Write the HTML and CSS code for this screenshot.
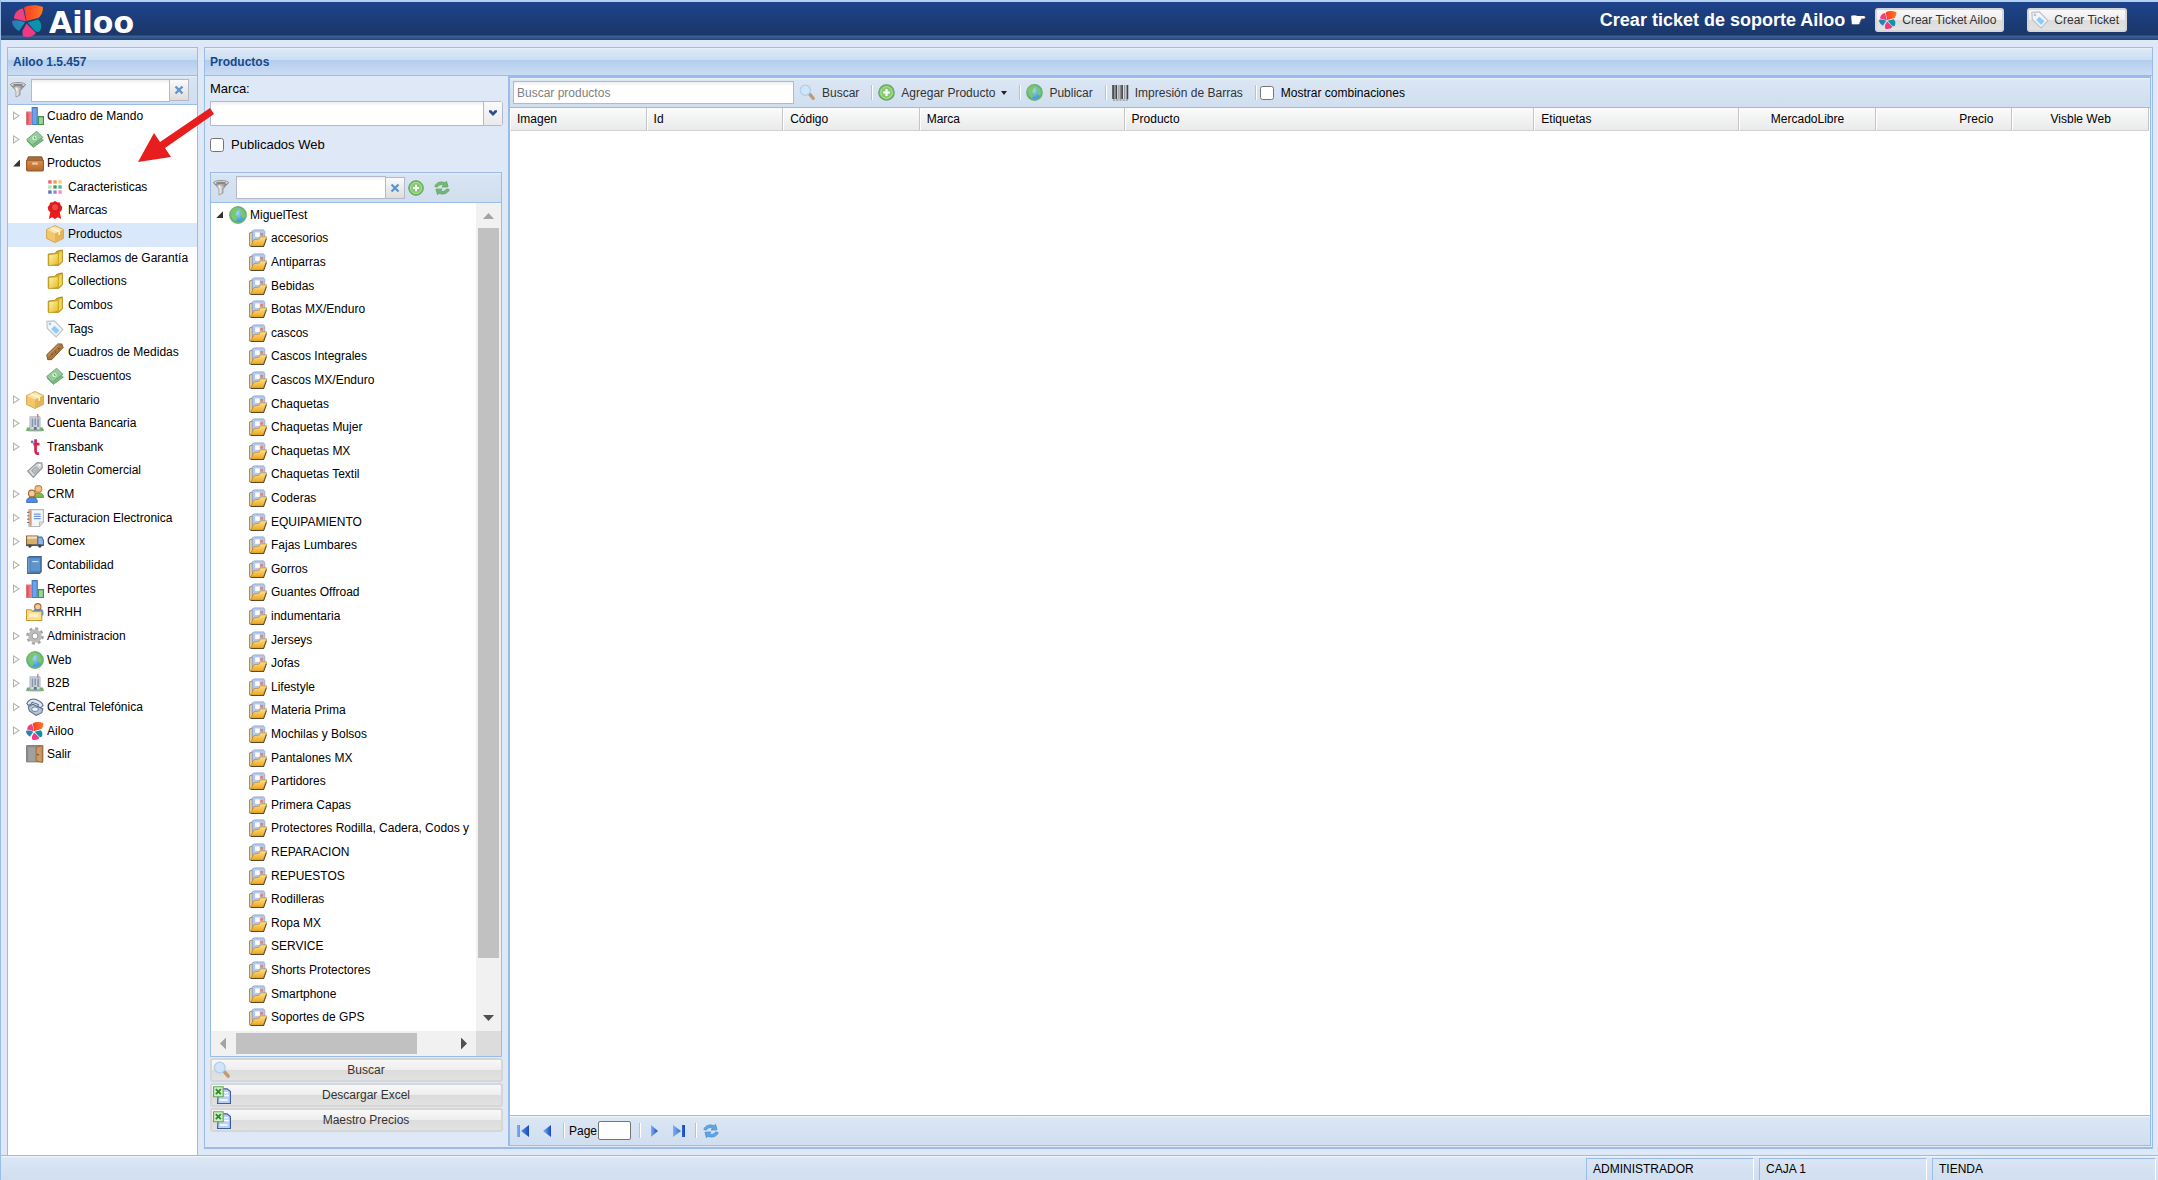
FILE: index.html
```html
<!DOCTYPE html>
<html lang="es">
  <head>
    <meta charset="UTF-8" />
    <meta name="viewport" content="width=device-width, initial-scale=1.0" />
    <title>Ailoo - Productos</title>
    <link rel="stylesheet" href="styles.css">
  </head>
  <body>
    <!-- Icons -->
    <svg class="sprite" aria-hidden="true">
      <defs>
        <linearGradient id="g-red" x1="0" x2="1"><stop offset="0" stop-color="#e0343f" /><stop offset="1" stop-color="#f59a9a" /></linearGradient>
        <linearGradient id="g-gold" x1="0" x2="1" y2="1"><stop offset="0" stop-color="#fdf6b0" /><stop offset="1" stop-color="#e3b820" /></linearGradient>
        <linearGradient id="g-folder" x2="0" y2="1"><stop offset="0" stop-color="#ffe28a" /><stop offset="1" stop-color="#eda51e" /></linearGradient>
        <linearGradient id="g-wood" x2="0" y2="1"><stop offset="0" stop-color="#d98d4c" /><stop offset="1" stop-color="#b56a2c" /></linearGradient>
        <linearGradient id="g-steel" x1="0" x2="1"><stop offset="0" stop-color="#555" /><stop offset=".4" stop-color="#f2f2f2" /><stop offset="1" stop-color="#555" /></linearGradient>
        <linearGradient id="g-blue" x1="0" x2="1"><stop offset="0" stop-color="#7fb0f5" /><stop offset="1" stop-color="#1549c0" /></linearGradient>
        <linearGradient id="g-orange" x1="0" x2="1"><stop offset="0" stop-color="#fb3a2c" /><stop offset="1" stop-color="#fd7a1c" /></linearGradient>
        <linearGradient id="g-teal" x1="0" x2="1"><stop offset="0" stop-color="#3a6fb4" /><stop offset="1" stop-color="#0a9db4" /></linearGradient>
        <radialGradient id="g-globe" cx=".4" cy=".35"><stop offset="0" stop-color="#a8dcf8" /><stop offset="1" stop-color="#4a9fdc" /></radialGradient>
      </defs>
      <symbol id="i-chart" viewBox="0 0 16 16">
        <path d="M.5 4.500h4v11h-4z" fill="url(#g-red)" stroke="#e2757b" />
        <path d="M5.500.5h4.500v15h-4.500z" fill="#6ea3ea" stroke="#4478cc" />
        <path d="M11 8.500h4.500v7h-4.500z" fill="#9ad49b" stroke="#3f9247" />
      </symbol>
      <symbol id="i-money" viewBox="0 0 16 16">
        <path d="M1 10 10.500 4.500l5 4.500-9 6.500z" fill="#7fb886" stroke="#5c9c66" stroke-width=".6" />
        <path d="M.5 8.500 9.500 1l5.500 5.500-9.500 7z" fill="#94cb98" stroke="#5c9c66" stroke-width=".7" />
        <circle cx="7.500" cy="7.200" r="2" fill="#d8f0d6" /><path d="m7.200 6 1 2" stroke="#5c9c66" />
      </symbol>
      <symbol id="i-crate" viewBox="0 0 16 16">
        <path d="M2 2.500h12l1.500 4H.5z" fill="#a8713f" stroke="#6d4118" stroke-width=".7" />
        <rect x=".5" y="5.500" width="15" height="9.500" rx="1" fill="url(#g-wood)" stroke="#9c5a26" />
        <path d="M5.500 7.500h5v2h-5z" fill="#f1c79a" />
      </symbol>
      <symbol id="i-dots" viewBox="0 0 16 16">
        <path d="M2 2h3v3H2z" fill="#f26464" /><path d="M6.500 2h3v3h-3z" fill="#f59a54" /><path d="M11 2h3v3h-3z" fill="#f2d36b" />
        <path d="M2 6.500h3v3H2z" fill="#b7e0a3" /><path d="M6.500 6.500h3v3h-3z" fill="#3aa845" /><path d="M11 6.500h3v3h-3z" fill="#4db9b0" />
        <path d="M2 11h3v3H2z" fill="#5476c4" /><path d="M6.500 11h3v3h-3z" fill="#b07cc8" /><path d="M11 11h3v3h-3z" fill="#f08cc8" />
      </symbol>
      <symbol id="i-ribbon" viewBox="0 0 16 16">
        <path d="M4 9 2.500 16l3-1.500L8 16l2.500-1.500 3 1.500L12 9z" fill="#f01818" />
        <path d="m8 0 2 1 2.200.3.800 2.200L14.500 5.500 14 8l-1.500 1.800-2.300.7L8 11.500l-2.200-1-2.300-.7L2 8l-.5-2.500L3 3.500l.8-2.200L6 1z" fill="#e61c1c" />
        <circle cx="8" cy="5.600" r="3.200" fill="#f04848" stroke="#c91010" stroke-width=".7" />
      </symbol>
      <symbol id="i-box" viewBox="0 0 16 16">
        <path d="M8 .5 15.500 4v8L8 15.500.5 12V4z" fill="#f3c76c" stroke="#d2a04a" stroke-width=".8" />
        <path d="M8 1 15 4.200 8 7.500 1 4.200z" fill="#fbe6a8" /><path d="m8 7.500 7-3.300v7.500l-7 3.300z" fill="#e6b356" />
        <path d="m3.500 2.800 7.500 3.400v3l1.500-.7V5.400L5.500 2z" fill="#fff6dc" />
      </symbol>
      <symbol id="i-files" viewBox="0 0 16 16">
        <path d="M2 4.500 8 4l1.500-2L14.500.8v10.700l-3 3H2z" fill="#d8ae22" stroke="#a98310" stroke-width=".8" />
        <path d="m2.500 5 8.500-1V13.500l-8.500 1.500z" fill="url(#g-gold)" stroke="#c49a18" stroke-width=".6" />
        <path d="m11.500 3.500 2.500-1.500v9l-2.500 2z" fill="#f2d84c" />
      </symbol>
      <symbol id="i-tag" viewBox="0 0 16 16">
        <path d="M.7 1.200 7.500.8 15 8.500 9 15 1.200 7.500z" fill="#f3f6f9" stroke="#b9c3cc" />
        <path d="m7.500 5 4.500 4.200-3 3.200-4.500-4.300z" fill="#8fcbfa" /><circle cx="3.500" cy="3.500" r="1.200" fill="#b9c3cc" />
      </symbol>
      <symbol id="i-ruler" viewBox="0 0 16 16">
        <path d="M.6 10.500 10.500.8h3.500l1.300 3.200L5 14.800H1.500z" fill="#a97640" stroke="#80501f" stroke-width=".8" />
        <path d="m1.500 11.500 10-10" stroke="#c99860" /><path d="M5 10h1M8 8h1M11 5h1" stroke="#5d3610" />
      </symbol>
      <symbol id="i-bank" viewBox="0 0 16 16">
        <path d="M1 12h14l1 3H0z" fill="#6ab35f" /><path d="M3.500 2.500h9V14h-9z" fill="#d2d9e1" stroke="#9aa5b1" stroke-width=".7" />
        <path d="M5 4h1.500v7.500H5zM7.500 4H9v6H7.500zM10 4h1.500v7.500H10z" fill="#8797aa" /><path d="M7 11.500h2.500V14H7z" fill="#5d7390" />
        <path d="M2 14.500h12v1H2z" fill="#aaa" /><path d="M10 0h1v3h-1z" fill="#d55" />
      </symbol>
      <symbol id="i-transbank" viewBox="0 0 16 16">
        <path d="M8.500 1v10.500c0 2 1 2.700 3 2.200M6.500 5.500H12" fill="none" stroke="#d6224f" stroke-width="2.400" />
        <circle cx="5.500" cy="3.500" r="1.200" fill="#3f7fd0" />
      </symbol>
      <symbol id="i-label" viewBox="0 0 16 16">
        <path d="M1.500 9 10 1.500 14 1.800 14.500 6 6.500 14.500z" fill="#d5d8db" stroke="#8d9297" />
        <path d="m5 8.500 4-3.500 2.500 2.500-4 4z" fill="#b8bdc2" stroke="#8d9297" stroke-width=".7" /><circle cx="12.200" cy="3.700" r="1" fill="#fff" />
      </symbol>
      <symbol id="i-users" viewBox="0 0 16 16">
        <path d="M6.500 10c0-4 9-4 9 0v1h-9z" fill="#82bb4c" stroke="#4c8a22" stroke-width=".7" /><circle cx="11" cy="3.500" r="3" fill="#f5c088" stroke="#c28a3c" />
        <path d="M.5 14.500c0-5 9.500-5 9.500 0v1H.5z" fill="#4f8fdc" stroke="#2c62ad" stroke-width=".7" /><circle cx="5.200" cy="7.500" r="3" fill="#f5c8a0" stroke="#a86a30" />
      </symbol>
      <symbol id="i-invoice" viewBox="0 0 16 16">
        <path d="M2.500.5h13v11l-3.500 4H2.500z" fill="#f4f5f7" stroke="#b5b9bf" /><path d="M3 1h2v14H3z" fill="#dc9866" />
        <path d="M7 4.500h6M7 6.500h6M7 8.500h6" stroke="#6d9bdd" /><path d="M1 3h2M1 6h2M1 9h2M1 12h2" stroke="#777" />
        <path d="M12 15.500v-4h3.500" fill="#ddd" stroke="#aaa" stroke-width=".6" />
      </symbol>
      <symbol id="i-truck" viewBox="0 0 16 16">
        <path d="M.5 3.500h10v8H.5z" fill="#d8ad72" stroke="#8b6536" /><path d="M1 4h9v2H1z" fill="#f4dfba" />
        <path d="M10.500 4.500h3.500l1.500 3v4.500h-5z" fill="#8fb6e5" stroke="#4672a8" /><path d="M0 11h15.500v1.500H0z" fill="#4a5668" />
        <circle cx="3.500" cy="12.500" r="1.500" fill="#444" /><circle cx="12.300" cy="12.500" r="1.500" fill="#444" />
      </symbol>
      <symbol id="i-book" viewBox="0 0 16 16">
        <path d="M1.500 1.500 3 .5h10.500v13.500L12 15.500H1.500z" fill="#4a7db5" stroke="#3a6698" /><path d="M4 2h8.500v11.500H4z" fill="#5f93c9" />
        <path d="M5.500 5H11" stroke="#cfe2f5" /><path d="M2.500 2v12.500" stroke="#85b0da" />
      </symbol>
      <symbol id="i-staff" viewBox="0 0 16 16">
        <path d="M6 8c0-4.500 9.500-4.500 9.500 0v3H6z" fill="#5b93d8" /><circle cx="10.500" cy="3.300" r="2.800" fill="#f5c8a0" stroke="#a86a30" />
        <path d="M.5 6h4l1.500 1.500h8v8H.5z" fill="#fbe08c" stroke="#c99a35" /><path d="M3 9.500h8v3H3z" fill="#fff3c4" />
      </symbol>
      <symbol id="i-gear" viewBox="0 0 16 16">
        <circle cx="8" cy="8" r="6.600" fill="none" stroke="#a4a4a4" stroke-width="2.400" stroke-dasharray="2.600 2.584" />
        <circle cx="8" cy="8" r="4.300" fill="none" stroke="#bcbcbc" stroke-width="3.400" /><circle cx="8" cy="8" r="2.600" fill="#fff" stroke="#8e8e8e" stroke-width=".8" />
      </symbol>
      <symbol id="i-globe" viewBox="0 0 16 16">
        <circle cx="8" cy="8" r="7.200" fill="url(#g-globe)" stroke="#6db562" stroke-width="1.400" />
        <path d="M2 5c1-2.500 3-3.500 5.500-3.800L8.500 3 6.500 5 7 6.500 5 7 7.500 9 6.500 12 5.500 13.500C3 12 1.500 9 2 5zM10 2l3 2 1.500 4-1.500 3.500-1.500-2L10 8l.5-2.500L9.500 4z" fill="#7cc66c" />
      </symbol>
      <symbol id="i-phone" viewBox="0 0 16 16">
        <path d="m2 8 4-2.500L15 9.500 14 13l-5 2.500-6-4z" fill="#b6c4d8" stroke="#586c8c" stroke-width=".9" />
        <path d="M.7 4.800C2 1.500 6 .2 9 1.300c3 1.200 6 3.200 6.200 5.500l-2.400 2-2.300-1.500.5-1.500L5.500 3.800 4.500 5.500 2 6.500z" fill="#dce4ef" stroke="#586c8c" stroke-width=".9" />
        <ellipse cx="8" cy="10" rx="3" ry="2" fill="#f3f6fa" stroke="#586c8c" stroke-width=".7" />
      </symbol>
      <symbol id="i-ailoo" viewBox="0 0 32 32">
        <path d="M14 16.500 2 13.500C2 8 6 4 11 3.500z" fill="#f0417c" />
        <path d="M14.500 16 12 2.500C17-.5 25-.5 31 2c0 5-2 9-5 11z" fill="url(#g-orange)" />
        <path d="M15.500 17.500 26 14.500c4 3 4 8 1.500 12-2 1-4 0-5-1z" fill="#0a93ac" />
        <path d="M14.500 18.500 24 28c-3 4-9 5-13 3-1-3-.5-6 .5-7z" fill="#ee3a84" />
        <path d="M13 17.500 7 26C3 24 0 20 0 16c3-1.500 8-1 13 1.500z" fill="url(#g-teal)" />
      </symbol>
      <symbol id="i-door" viewBox="0 0 16 16">
        <path d="M.5.500h14.500v14.500H.5z" fill="#8a8a8a" stroke="#777" stroke-width=".8" /><path d="M2 2h7v12.500H2z" fill="#a0a0a0" />
        <path d="m9 2 5.500-1.500v15L9 14z" fill="#cf9a62" stroke="#9a6832" stroke-width=".8" /><circle cx="10.500" cy="8.500" r=".8" fill="#553" />
      </symbol>
      <symbol id="i-category" viewBox="0 0 16 16">
        <path d="M.5 3.500 3 2.500V15H.5z" fill="#ecd596" stroke="#8d7d5a" stroke-width=".8" /><path d="M3 1.500 5 .8h8l1 1.500V10H3z" fill="#b5c8ea" stroke="#93a8d0" stroke-width=".8" />
        <path d="M5.500 3h4v4h-4z" fill="#fff" /><path d="M10 3.500h2.500V6H10z" fill="#e08472" />
        <path d="M1.500 15.300 4.500 9.500l4.500-.5L10 7h5.800l-3 8.300z" fill="url(#g-folder)" stroke="#b9862c" stroke-width=".6" /><path d="M1.500 15.500h11.500l2.500-7" fill="none" stroke="#5c4a28" stroke-width=".9" />
      </symbol>
      <symbol id="i-filter" viewBox="0 0 16 16">
        <path d="M.5 2.500 6 9v6l4-2V9l5.500-6.500z" fill="url(#g-steel)" stroke="#777" stroke-width=".6" />
        <ellipse cx="8" cy="2.700" rx="7.400" ry="2.200" fill="#ddd" stroke="#777" stroke-width=".7" /><ellipse cx="8" cy="2.900" rx="5" ry="1.200" fill="#888" />
      </symbol>
      <symbol id="i-add" viewBox="0 0 16 16">
        <circle cx="8" cy="8" r="7.300" fill="#7cc26c" stroke="#5ba652" /><circle cx="8" cy="8" r="5.500" fill="#85ca70" stroke="#b9e2ac" stroke-width=".8" />
        <path d="M8 4.800v6.400M4.800 8h6.400" stroke="#fff" stroke-width="2" />
      </symbol>
      <symbol id="i-refresh" viewBox="0 0 16 16">
        <path d="M.8 6.500C2 2.500 7 .8 11 2.800l1.500-1.500 1.500 5.500-6 .2 1.500-1.700C7.500 4 4.500 4.500 3.500 7z" fill="currentColor" fill-opacity=".75" stroke="currentColor" stroke-width=".8" />
        <path d="M15.200 9.500C14 13.500 9 15.200 5 13.200l-1.500 1.500L2 9.200 8 9l-1.500 1.700c2 1.300 5 .8 6-1.700z" fill="currentColor" fill-opacity=".75" stroke="currentColor" stroke-width=".8" />
      </symbol>
      <symbol id="i-search" viewBox="0 0 16 16">
        <path d="m10 9.500 3.500 4" stroke="#c39a6c" stroke-width="3" stroke-linecap="round" />
        <circle cx="6" cy="5.800" r="4.800" fill="#cfe5fa" stroke="#b4cdea" stroke-width="1.200" />
      </symbol>
      <symbol id="i-barcode" viewBox="0 0 16 16">
        <path d="M1 1v13M4 1v13M9.500 1v13M14.500 1v13" stroke="#444" stroke-width="1.600" /><path d="M2.500 1v13M6.500 1v13M8 1v13M12 1v13" stroke="#888" /><path d="M1 15h14" stroke="#777" stroke-dasharray="2 1" />
      </symbol>
      <symbol id="i-excel" viewBox="0 0 16 16">
        <path d="M5 2.500h7.500l3 2.500v10.500H4z" fill="#b9d0f4" stroke="#3a5f9c" /><path d="M6 12.500h7M10 6h3.500M10 8.500h4" stroke="#fff" stroke-width="1.400" />
        <path d="M.5.700h8.500v8.800H.5z" fill="#d3edca" stroke="#62ab56" /><path d="m2.500 2.800 4.500 4.500M7 2.800 2.500 7.300" stroke="#2a8c24" stroke-width="1.600" />
      </symbol>
      <symbol id="i-first" viewBox="0 0 16 16"><path d="M2 2h3v12H2zM14 2v12L6 8z" fill="url(#g-blue)" /></symbol>
      <symbol id="i-prev" viewBox="0 0 16 16"><path d="M12 2v12L4 8z" fill="url(#g-blue)" /></symbol>
      <symbol id="i-next" viewBox="0 0 16 16"><path d="M4 2v12l7-6z" fill="url(#g-blue)" /></symbol>
      <symbol id="i-last" viewBox="0 0 16 16"><path d="M11 2h3v12h-3zM2 2v12l8-6z" fill="url(#g-blue)" /></symbol>
      <symbol id="i-clear" viewBox="0 0 16 16"><path d="m4 4 8 8M12 4l-8 8" stroke="#5b93cd" stroke-width="2.600" /></symbol>
    </svg>

    <header class="topbar">
      <div class="logo">
        <svg class="logo-mark"><use href="#i-ailoo" /></svg>
        <span>Ailoo</span>
      </div>
      <div class="support">
        <strong>Crear ticket de soporte Ailoo ☛</strong>
        <button type="button" class="btn"><svg class="icon"><use href="#i-ailoo" /></svg>Crear Ticket Ailoo</button>
        <button type="button" class="btn"><svg class="icon"><use href="#i-tag" /></svg>Crear Ticket</button>
      </div>
    </header>

    <div class="viewport">
      <nav class="sidebar">
        <h2 class="panel-title">Ailoo 1.5.457</h2>
        <div class="filter-bar">
          <svg class="icon"><use href="#i-filter" /></svg>
          <input type="text" class="field" aria-label="Filtrar menú" />
          <button type="button" class="clear" aria-label="Limpiar"><svg><use href="#i-clear" /></svg></button>
        </div>
        <ul class="tree menu">
          <li><a href="#"><i class="arrow"></i><svg class="icon"><use href="#i-chart" /></svg>Cuadro de Mando</a></li>
          <li><a href="#"><i class="arrow"></i><svg class="icon"><use href="#i-money" /></svg>Ventas</a></li>
          <li><a href="#"><i class="arrow open"></i><svg class="icon"><use href="#i-crate" /></svg>Productos</a></li>
          <li class="child"><a href="#"><svg class="icon"><use href="#i-dots" /></svg>Caracteristicas</a></li>
          <li class="child"><a href="#"><svg class="icon"><use href="#i-ribbon" /></svg>Marcas</a></li>
          <li class="child selected"><a href="#"><svg class="icon"><use href="#i-box" /></svg>Productos</a></li>
          <li class="child"><a href="#"><svg class="icon"><use href="#i-files" /></svg>Reclamos de Garantía</a></li>
          <li class="child"><a href="#"><svg class="icon"><use href="#i-files" /></svg>Collections</a></li>
          <li class="child"><a href="#"><svg class="icon"><use href="#i-files" /></svg>Combos</a></li>
          <li class="child"><a href="#"><svg class="icon"><use href="#i-tag" /></svg>Tags</a></li>
          <li class="child"><a href="#"><svg class="icon"><use href="#i-ruler" /></svg>Cuadros de Medidas</a></li>
          <li class="child"><a href="#"><svg class="icon"><use href="#i-money" /></svg>Descuentos</a></li>
          <li><a href="#"><i class="arrow"></i><svg class="icon"><use href="#i-box" /></svg>Inventario</a></li>
          <li><a href="#"><i class="arrow"></i><svg class="icon"><use href="#i-bank" /></svg>Cuenta Bancaria</a></li>
          <li><a href="#"><i class="arrow"></i><svg class="icon"><use href="#i-transbank" /></svg>Transbank</a></li>
          <li><a href="#"><i class="arrow none"></i><svg class="icon"><use href="#i-label" /></svg>Boletin Comercial</a></li>
          <li><a href="#"><i class="arrow"></i><svg class="icon"><use href="#i-users" /></svg>CRM</a></li>
          <li><a href="#"><i class="arrow"></i><svg class="icon"><use href="#i-invoice" /></svg>Facturacion Electronica</a></li>
          <li><a href="#"><i class="arrow"></i><svg class="icon"><use href="#i-truck" /></svg>Comex</a></li>
          <li><a href="#"><i class="arrow"></i><svg class="icon"><use href="#i-book" /></svg>Contabilidad</a></li>
          <li><a href="#"><i class="arrow"></i><svg class="icon"><use href="#i-chart" /></svg>Reportes</a></li>
          <li><a href="#"><i class="arrow none"></i><svg class="icon"><use href="#i-staff" /></svg>RRHH</a></li>
          <li><a href="#"><i class="arrow"></i><svg class="icon"><use href="#i-gear" /></svg>Administracion</a></li>
          <li><a href="#"><i class="arrow"></i><svg class="icon"><use href="#i-globe" /></svg>Web</a></li>
          <li><a href="#"><i class="arrow"></i><svg class="icon"><use href="#i-bank" /></svg>B2B</a></li>
          <li><a href="#"><i class="arrow"></i><svg class="icon"><use href="#i-phone" /></svg>Central Telefónica</a></li>
          <li><a href="#"><i class="arrow"></i><svg class="icon"><use href="#i-ailoo" /></svg>Ailoo</a></li>
          <li><a href="#"><i class="arrow none"></i><svg class="icon"><use href="#i-door" /></svg>Salir</a></li>
        </ul>
        <svg class="pointer" viewBox="0 0 76 56" aria-hidden="true">
          <path d="M72 0 22 34 16 25 0 54 33 49 27 40 76 6z" fill="#e81e1e" />
        </svg>
      </nav>

      <main class="panel">
        <h1 class="panel-title">Productos</h1>
        <div class="panel-body">
          <section class="search-form">
            <label for="marca">Marca:</label>
            <div class="combo">
              <select id="marca"><option></option></select>
              <svg class="combo-arrow" viewBox="0 0 10 8"><path d="M0 0h3l2 2.500L7 0h3v2L5 7 0 2z" fill="#2c4f8c" /></svg>
            </div>
            <label class="check"><input type="checkbox" />Publicados Web</label>

            <div class="categories">
              <div class="filter-bar">
                <svg class="icon"><use href="#i-filter" /></svg>
                <input type="text" class="field" aria-label="Filtrar categorías" />
                <button type="button" class="clear" aria-label="Limpiar"><svg><use href="#i-clear" /></svg></button>
                <button type="button" class="tool" aria-label="Agregar"><svg><use href="#i-add" /></svg></button>
                <button type="button" class="tool green" aria-label="Actualizar"><svg><use href="#i-refresh" /></svg></button>
              </div>
              <div class="scroll-area">
                <ul class="tree category-tree">
                  <li><a href="#"><i class="arrow open"></i><svg class="icon"><use href="#i-globe" /></svg>MiguelTest</a></li>
                  <li class="child"><a href="#"><svg class="icon"><use href="#i-category" /></svg>accesorios</a></li>
                  <li class="child"><a href="#"><svg class="icon"><use href="#i-category" /></svg>Antiparras</a></li>
                  <li class="child"><a href="#"><svg class="icon"><use href="#i-category" /></svg>Bebidas</a></li>
                  <li class="child"><a href="#"><svg class="icon"><use href="#i-category" /></svg>Botas MX/Enduro</a></li>
                  <li class="child"><a href="#"><svg class="icon"><use href="#i-category" /></svg>cascos</a></li>
                  <li class="child"><a href="#"><svg class="icon"><use href="#i-category" /></svg>Cascos Integrales</a></li>
                  <li class="child"><a href="#"><svg class="icon"><use href="#i-category" /></svg>Cascos MX/Enduro</a></li>
                  <li class="child"><a href="#"><svg class="icon"><use href="#i-category" /></svg>Chaquetas</a></li>
                  <li class="child"><a href="#"><svg class="icon"><use href="#i-category" /></svg>Chaquetas Mujer</a></li>
                  <li class="child"><a href="#"><svg class="icon"><use href="#i-category" /></svg>Chaquetas MX</a></li>
                  <li class="child"><a href="#"><svg class="icon"><use href="#i-category" /></svg>Chaquetas Textil</a></li>
                  <li class="child"><a href="#"><svg class="icon"><use href="#i-category" /></svg>Coderas</a></li>
                  <li class="child"><a href="#"><svg class="icon"><use href="#i-category" /></svg>EQUIPAMIENTO</a></li>
                  <li class="child"><a href="#"><svg class="icon"><use href="#i-category" /></svg>Fajas Lumbares</a></li>
                  <li class="child"><a href="#"><svg class="icon"><use href="#i-category" /></svg>Gorros</a></li>
                  <li class="child"><a href="#"><svg class="icon"><use href="#i-category" /></svg>Guantes Offroad</a></li>
                  <li class="child"><a href="#"><svg class="icon"><use href="#i-category" /></svg>indumentaria</a></li>
                  <li class="child"><a href="#"><svg class="icon"><use href="#i-category" /></svg>Jerseys</a></li>
                  <li class="child"><a href="#"><svg class="icon"><use href="#i-category" /></svg>Jofas</a></li>
                  <li class="child"><a href="#"><svg class="icon"><use href="#i-category" /></svg>Lifestyle</a></li>
                  <li class="child"><a href="#"><svg class="icon"><use href="#i-category" /></svg>Materia Prima</a></li>
                  <li class="child"><a href="#"><svg class="icon"><use href="#i-category" /></svg>Mochilas y Bolsos</a></li>
                  <li class="child"><a href="#"><svg class="icon"><use href="#i-category" /></svg>Pantalones MX</a></li>
                  <li class="child"><a href="#"><svg class="icon"><use href="#i-category" /></svg>Partidores</a></li>
                  <li class="child"><a href="#"><svg class="icon"><use href="#i-category" /></svg>Primera Capas</a></li>
                  <li class="child"><a href="#"><svg class="icon"><use href="#i-category" /></svg>Protectores Rodilla, Cadera, Codos y</a></li>
                  <li class="child"><a href="#"><svg class="icon"><use href="#i-category" /></svg>REPARACION</a></li>
                  <li class="child"><a href="#"><svg class="icon"><use href="#i-category" /></svg>REPUESTOS</a></li>
                  <li class="child"><a href="#"><svg class="icon"><use href="#i-category" /></svg>Rodilleras</a></li>
                  <li class="child"><a href="#"><svg class="icon"><use href="#i-category" /></svg>Ropa MX</a></li>
                  <li class="child"><a href="#"><svg class="icon"><use href="#i-category" /></svg>SERVICE</a></li>
                  <li class="child"><a href="#"><svg class="icon"><use href="#i-category" /></svg>Shorts Protectores</a></li>
                  <li class="child"><a href="#"><svg class="icon"><use href="#i-category" /></svg>Smartphone</a></li>
                  <li class="child"><a href="#"><svg class="icon"><use href="#i-category" /></svg>Soportes de GPS</a></li>
                </ul>
                <div class="vscroll"><i class="tri up"></i><div class="track"><div class="thumb"></div></div><i class="tri down"></i></div>
                <div class="hscroll"><i class="tri left"></i><div class="track"><div class="thumb"></div></div><i class="tri right"></i></div>
                <div class="corner"></div>
              </div>
            </div>

            <button type="button" class="btn wide"><svg class="icon"><use href="#i-search" /></svg><span>Buscar</span></button>
            <button type="button" class="btn wide"><svg class="icon"><use href="#i-excel" /></svg><span>Descargar Excel</span></button>
            <button type="button" class="btn wide"><svg class="icon"><use href="#i-excel" /></svg><span>Maestro Precios</span></button>
          </section>

          <section class="grid-panel">
            <div class="toolbar">
              <input type="text" class="field" placeholder="Buscar productos" aria-label="Buscar productos" />
              <button type="button" class="flat"><svg class="icon"><use href="#i-search" /></svg>Buscar</button>
              <span class="sep"></span>
              <button type="button" class="flat"><svg class="icon"><use href="#i-add" /></svg>Agregar Producto<i class="caret"></i></button>
              <span class="sep"></span>
              <button type="button" class="flat"><svg class="icon"><use href="#i-globe" /></svg>Publicar</button>
              <span class="sep"></span>
              <button type="button" class="flat"><svg class="icon"><use href="#i-barcode" /></svg>Impresión de Barras</button>
              <span class="sep"></span>
              <label class="check"><input type="checkbox" />Mostrar combinaciones</label>
            </div>
            <div class="grid-body">
              <table>
                <colgroup>
                  <col class="c1" /><col class="c1" /><col class="c1" /><col class="c2" /><col class="c3" /><col class="c2" /><col class="c1" /><col class="c1" /><col class="c1" />
                </colgroup>
                <thead>
                  <tr>
                    <th>Imagen</th>
                    <th>Id</th>
                    <th>Código</th>
                    <th>Marca</th>
                    <th>Producto</th>
                    <th>Etiquetas</th>
                    <th class="center">MercadoLibre</th>
                    <th class="right">Precio</th>
                    <th class="center">Visble Web</th>
                  </tr>
                </thead>
              </table>
            </div>
            <div class="pager">
              <button type="button" aria-label="Primera"><svg><use href="#i-first" /></svg></button>
              <button type="button" aria-label="Anterior"><svg><use href="#i-prev" /></svg></button>
              <span class="sep"></span>
              <label for="page">Page</label><input type="text" id="page" />
              <span class="sep"></span>
              <button type="button" aria-label="Siguiente"><svg><use href="#i-next" /></svg></button>
              <button type="button" aria-label="Última"><svg><use href="#i-last" /></svg></button>
              <span class="sep"></span>
              <button type="button" class="blue" aria-label="Refrescar"><svg><use href="#i-refresh" /></svg></button>
            </div>
          </section>
        </div>
      </main>
    </div>

    <footer class="statusbar">
      <span>ADMINISTRADOR</span>
      <span>CAJA 1</span>
      <span class="last">TIENDA</span>
    </footer>
  </body>
</html>
```
FILE: styles.css
```css
* {
  box-sizing: border-box;
}

body {
  margin: 0;
  height: 100vh;
  display: flex;
  flex-direction: column;
  background: #dfe8f6;
  border-left: 1px solid #99bce8;
  color: #000;
  font-family: "Liberation Sans", Arial, sans-serif;
  font-size: 12px;
  overflow: hidden;
}

button,
input,
select {
  font: inherit;
  margin: 0;
}

button {
  padding: 0;
  border: 0;
  background: none;
  color: #333;
}

.sprite {
  position: absolute;
  width: 0;
  height: 0;
}

.icon {
  width: 18px;
  height: 18px;
  flex: none;
}

/* Top bar */
.topbar {
  flex: none;
  height: 40px;
  padding: 0 31px 0 11px;
  display: flex;
  justify-content: space-between;
  align-items: flex-start;
  border-top: 2px solid #b5cff0;
  background: linear-gradient(#1d438b, #1b3768 33px, #17305f 33px, #3d6496 34px, #22487c);
  color: #fff;
}

.logo {
  display: flex;
  align-items: center;
  gap: 5px;
  height: 38px;
  font: bold 30px/38px "DejaVu Sans", sans-serif;
}

.logo span {
  padding-top: 3px;
}

.logo-mark {
  width: 32px;
  height: 32px;
}

.support {
  display: flex;
  align-items: center;
  padding-top: 6px;
}

.support strong {
  font-size: 18px;
  margin-right: 9px;
}

.support .btn + .btn {
  margin-left: 23px;
}

.btn {
  display: flex;
  align-items: center;
  height: 24px;
  padding: 0 6px 0 2px;
  border: 2px solid #d6d6d6;
  border-radius: 3px;
  background: linear-gradient(#f8f8f8, #eee 48%, #dcdcdc 52%, #e2e2e2);
}

.btn .icon {
  margin-right: 5px;
}

/* Panels */
.viewport {
  flex: 1;
  min-height: 0;
  display: flex;
  gap: 6px;
  padding: 7px 5px 0 6px;
}

.panel-title {
  flex: none;
  margin: 0;
  height: 28px;
  padding-left: 5px;
  border-bottom: 1px solid #99bce8;
  background: linear-gradient(#eaf2fb, #dae7f6 2px, #cddef3 45%, #b3cdef 46%, #bbd1ef 60%, #cbddf3);
  color: #15498b;
  font-size: 12px;
  line-height: 28px;
}

.sidebar {
  position: relative;
  flex: none;
  width: 191px;
  display: flex;
  flex-direction: column;
  border: 1px solid #99bce8;
  border-bottom: 0;
  background: #fff;
}

.filter-bar {
  flex: none;
  display: flex;
  align-items: center;
  height: 29px;
  padding: 0 2px;
  border-bottom: 1px solid #99bce8;
  background: linear-gradient(#e6eef8, #d8e4f2 2px, #d0deef);
}

.filter-bar .icon {
  width: 16px;
  height: 16px;
}

.field {
  height: 23px;
  padding: 0 3px;
  border: 1px solid #b5b8c8;
  background: linear-gradient(#eee, #fff 4px);
  outline: none;
}

.field::placeholder {
  color: #808080;
  opacity: 1;
}

.filter-bar .field {
  width: 139px;
  margin-left: 5px;
}

.clear {
  width: 19px;
  height: 22px;
  display: flex;
  align-items: center;
  justify-content: center;
  border: 1px solid #b5b8c8;
  border-left: 0;
  background: linear-gradient(#fafafa, #ddd);
}

.clear svg {
  width: 14px;
  height: 14px;
}

.tool {
  width: 16px;
  height: 16px;
  margin-left: 3px;
}

.tool.green {
  width: 18px;
  margin-left: 9px;
  color: #5aa552;
}

.tool svg,
.pager svg {
  display: block;
  width: 100%;
  height: 100%;
}

/* Trees */
.tree {
  display: grid;
  margin: 0;
  padding: 0;
  list-style: none;
  overflow: hidden;
}

.menu {
  grid-template-rows: repeat(28, 1fr);
  height: 662px;
}

.category-tree {
  grid-template-rows: repeat(35, 1fr);
  height: 826px;
}

.tree a {
  display: flex;
  align-items: center;
  height: 100%;
  padding-left: 5px;
  color: inherit;
  text-decoration: none;
  white-space: nowrap;
}

.menu a {
  padding-bottom: 2px;
}

.tree .icon {
  margin-right: 3px;
}

.tree .child a {
  padding-left: 38px;
}

.tree .child .icon {
  margin-right: 4px;
}

.tree .selected {
  background: #d9e8fb;
}

/* Expander arrows */
.arrow {
  flex: none;
  width: 7px;
  height: 9px;
  margin-right: 6px;
  background: #b4b4b4;
  clip-path: polygon(0 0, 100% 50%, 0 100%, 0 0, 1px 2px, 1px 7px, 5px 50%, 1px 2px);
}

.arrow.open {
  height: 7px;
  background: #333;
  clip-path: polygon(100% 0, 100% 100%, 0 100%);
}

.arrow.none {
  visibility: hidden;
}

.pointer {
  position: absolute;
  left: 130px;
  top: 60px;
  width: 76px;
  height: 56px;
  z-index: 1;
}

.panel {
  flex: 1;
  min-width: 0;
  display: flex;
  flex-direction: column;
  margin-bottom: 6px;
  border: 1px solid #99bce8;
  border-bottom-width: 2px;
}

.panel-body {
  flex: 1;
  min-height: 0;
  display: flex;
}

/* Search form */
.search-form {
  flex: none;
  width: 303px;
  display: flex;
  flex-direction: column;
  padding: 0 5px 14px;
}

.search-form > label {
  height: 25px;
  font-size: 13px;
  line-height: 25px;
}

.combo {
  position: relative;
  flex: none;
  height: 25px;
}

.combo select {
  appearance: none;
  width: 100%;
  height: 100%;
  border: 1px solid #b5b8c8;
  border-radius: 0 3px 3px 0;
  background: linear-gradient(#eee, #fff 4px);
}

.combo-arrow {
  position: absolute;
  right: 1px;
  top: 1px;
  width: 19px;
  height: 23px;
  padding: 5px;
  border-left: 1px solid #b5b8c8;
  background: linear-gradient(#fafafa, #eaeaea);
  pointer-events: none;
}

.check {
  display: flex;
  align-items: center;
  gap: 7px;
}

.check input {
  width: 14px;
  height: 14px;
}

.search-form .check {
  margin: 6px 0 15px;
}

.categories {
  flex: 1;
  min-height: 0;
  display: flex;
  flex-direction: column;
  margin: 0 1px 1px 0;
  border: 1px solid #99bce8;
  background: #fff;
}

.categories .filter-bar {
  height: 30px;
}

.categories .filter-bar .field {
  width: 150px;
  margin-left: 7px;
}

.scroll-area {
  flex: 1;
  min-height: 0;
  display: grid;
  grid-template: minmax(0, 1fr) 25px / minmax(0, 1fr) 25px;
}

.vscroll,
.hscroll {
  display: flex;
  align-items: center;
  background: #f1f1f1;
}

.vscroll {
  flex-direction: column;
  padding: 10px 0;
}

.hscroll {
  padding: 0 9px;
}

.track {
  flex: 1;
}

.vscroll .track {
  width: 21px;
  margin: 9px 0 10px;
}

.hscroll .track {
  height: 21px;
  margin: 0 10px;
}

.thumb {
  background: #c1c1c1;
}

.vscroll .thumb {
  height: 94%;
}

.hscroll .thumb {
  width: 84%;
  height: 100%;
}

.corner {
  background: #dcdcdc;
}

.tri {
  flex: none;
  width: 11px;
  height: 6px;
  background: #505050;
  clip-path: polygon(0 0, 100% 0, 50% 100%);
}

.tri.up {
  background: #a3a3a3;
  clip-path: polygon(50% 0, 100% 100%, 0 100%);
}

.tri.left,
.tri.right {
  width: 6px;
  height: 12px;
  clip-path: polygon(0 0, 100% 50%, 0 100%);
}

.tri.left {
  background: #a3a3a3;
  clip-path: polygon(100% 0, 100% 100%, 0 50%);
}

.btn.wide {
  flex: none;
  margin-bottom: 1px;
  padding: 0 0 0 1px;
}

.btn.wide span {
  flex: 1;
}

.btn.wide .icon {
  margin-right: 0;
}

/* Products grid */
.grid-panel {
  flex: 1;
  min-width: 0;
  display: flex;
  flex-direction: column;
  margin: 0 1px 1px 0;
  border: 1px solid #99bce8;
  border-width: 2px 1px 1px 2px;
  background: #fff;
}

.toolbar,
.pager {
  flex: none;
  display: flex;
  align-items: center;
  height: 30px;
  background: linear-gradient(#f0f5fb, #dbe6f4 2px, #d0deef);
}

.toolbar {
  padding-left: 3px;
  border-bottom: 1px solid #99bce8;
}

.toolbar .field {
  width: 281px;
}

.flat {
  display: flex;
  align-items: center;
  padding: 0 12px 0 5px;
}

.flat .icon {
  width: 17px;
  height: 17px;
  margin-right: 6px;
}

.caret {
  margin-left: 6px;
  border: 3px solid transparent;
  border-top: 4px solid #222;
  border-bottom: 0;
}

.sep {
  width: 2px;
  height: 15px;
  border-left: 1px solid #98c8ff;
  border-right: 1px solid #fff;
}

.toolbar .check {
  margin-left: 3px;
}

.grid-body {
  flex: 1;
  padding-right: 1px;
}

table {
  width: 100%;
  table-layout: fixed;
  border-collapse: separate;
  border-spacing: 0;
}

.c1 {
  width: 8.333%;
}

.c2 {
  width: 12.5%;
}

.c3 {
  width: 25%;
}

th {
  height: 23px;
  padding: 0 6px;
  border-right: 1px solid #c5c5c5;
  border-bottom: 1px solid #d0d0d0;
  border-left: 1px solid #fff;
  background: linear-gradient(#fbfbfb, #e9eaeb);
  font-weight: normal;
  text-align: left;
}

th.center {
  text-align: center;
}

th.right {
  padding-right: 18px;
  text-align: right;
}

.pager {
  padding-left: 5px;
  border-top: 1px solid #99bce8;
}

.pager button {
  width: 16px;
  height: 16px;
  margin-right: 8px;
}

.pager button.blue {
  color: #3f8fdc;
}

.pager .sep {
  margin-right: 6px;
}

.pager label {
  margin-left: -2px;
}

.pager input {
  width: 33px;
  height: 19px;
  margin: 0 8px 0 1px;
  border: 1px solid #767676;
  border-radius: 2px;
}

/* Status bar */
.statusbar {
  flex: none;
  height: 25px;
  display: flex;
  justify-content: flex-end;
  gap: 5px;
  padding: 2px 2px 0 0;
  border-top: 1px solid #99bce8;
  background: linear-gradient(#f4f8fc, #dae6f4 2px, #d0deef);
}

.statusbar span {
  width: 168px;
  padding-left: 6px;
  border: 1px solid #99bce8;
  border-right-color: #fff;
  border-bottom: 0;
  line-height: 21px;
}

.statusbar .last {
  width: 224px;
}
```
